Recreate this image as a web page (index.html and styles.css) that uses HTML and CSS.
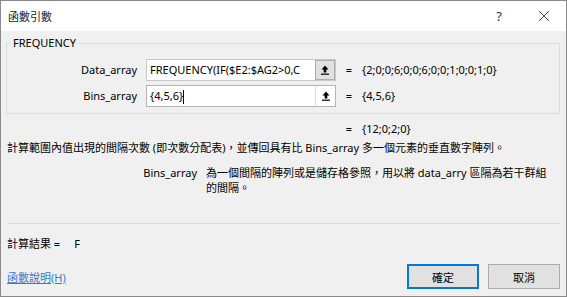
FILE: index.html
```html
<!DOCTYPE html>
<html>
<head>
<meta charset="utf-8">
<link rel="stylesheet" href="styles.css">
</head>
<body>
<div class="win">
  <div class="titlebar">
    <span class="title">函數引數</span>
    <span class="help">?</span>
    <span class="close"><svg width="12" height="12" viewBox="0 0 12 12"><path d="M1 1 L11 11 M11 1 L1 11" stroke="#444" stroke-width="1" fill="none"/></svg></span>
  </div>
  <div class="body">
    <fieldset class="group">
      <legend>FREQUENCY</legend>
      <div class="grid">
        <span class="lbl">Data_array</span>
        <div class="field">
          <span class="txt">FREQUENCY(IF($E2:$AG2&gt;0,C</span>
          <span class="ref pressed"><svg width="8" height="10" viewBox="0 0 8 10"><path d="M4 0.5 L7.5 4.5 L5.3 4.5 L5.3 7.5 L2.7 7.5 L2.7 4.5 L0.5 4.5 Z" fill="#000"/><rect x="0" y="8.6" width="8" height="1.2" fill="#000"/></svg></span>
        </div>
        <span class="eq">=</span>
        <span class="val">{2;0;0;6;0;0;6;0;0;1;0;0;1;0}</span>

        <span class="lbl">Bins_array</span>
        <div class="field focus">
          <span class="txt">{4,5,6}<span class="caret"></span></span>
          <span class="ref"><svg width="8" height="10" viewBox="0 0 8 10"><path d="M4 0.5 L7.5 4.5 L5.3 4.5 L5.3 7.5 L2.7 7.5 L2.7 4.5 L0.5 4.5 Z" fill="#000"/><rect x="0" y="8.6" width="8" height="1.2" fill="#000"/></svg></span>
        </div>
        <span class="eq">=</span>
        <span class="val">{4,5,6}</span>
      </div>
    </fieldset>
    <div class="grid result">
      <span></span><span></span>
      <span class="eq">=</span>
      <span class="val">{12;0;2;0}</span>
    </div>
    <p class="desc">計算範圍內值出現的間隔次數 (即次數分配表)，並傳回具有比 Bins_array 多一個元素的垂直數字陣列。</p>
    <div class="param">
      <span class="pname">Bins_array</span>
      <span class="ptext">為一個間隔的陣列或是儲存格參照，用以將 data_arry 區隔為若干群組的間隔。</span>
    </div>
    <div class="sep"></div>
    <div class="calc"><span>計算結果 =</span><span class="calcval">F</span></div>
    <div class="footer">
      <a class="link" href="#">函數說明(H)</a>
      <div class="buttons">
        <button class="btn default">確定</button>
        <button class="btn">取消</button>
      </div>
    </div>
  </div>
</div>
</body>
</html>
```
FILE: styles.css
```css
* { box-sizing: border-box; }
html, body { margin: 0; padding: 0; }
body {
  width: 567px;
  height: 297px;
  overflow: hidden;
  font-family: "Noto Sans", "Noto Sans CJK TC", sans-serif;
  font-size: 11px;
  color: #000;
  background: #f0f0f0;
}
.win {
  width: 567px;
  height: 297px;
  border: 1px solid #8a8a8a;
  background: #f0f0f0;
  display: flex;
  flex-direction: column;
}
.titlebar {
  height: 30px;
  background: #fff;
  display: flex;
  align-items: center;
  padding-left: 7px;
  flex: none;
}
.title { flex: 1; color: #222; }
.help { width: 20px; text-align: center; color: #333; font-size: 13px; margin-right: 25px; }
.close { width: 20px; display: flex; justify-content: center; margin-right: 12px; }
.body {
  flex: 1;
  padding: 0 6px 0 5px;
  display: flex;
  flex-direction: column;
}
.group {
  margin: 5px 0 0 0;
  padding: 0 0 6px 0;
  border: 1px solid #dcdcdc;
  min-width: 0;
}
.group legend {
  padding: 0 2px;
  margin-left: 4px;
  color: #000;
  line-height: 14px;
}
.grid {
  display: grid;
  grid-template-columns: 139px 195px 16px 1fr;
  row-gap: 4px;
  align-items: center;
  line-height: 16px;
}
.group .grid { margin-top: 9px; }
.lbl { text-align: right; padding-right: 9px; }
.eq { text-align: center; }
.val { padding-left: 5px; }
.field {
  width: 190px;
  height: 22px;
  border: 1px solid #c8c8c8;
  background: #fff;
  display: flex;
  align-items: stretch;
}
.field.focus { border-color: #b4b4b4; }
.txt {
  flex: 1;
  min-width: 0;
  overflow: hidden;
  white-space: nowrap;
  padding-left: 3px;
  line-height: 20px;
}
.caret {
  display: inline-block;
  width: 1px;
  height: 14px;
  background: #000;
  vertical-align: middle;
}
.ref {
  width: 20px;
  flex: none;
  display: flex;
  align-items: center;
  justify-content: center;
  border-left: 1px solid #e0e0e0;
  background: #fff;
}
.ref.pressed {
  background: #e1e1e1;
  border: 1px solid #adadad;
}
.result { margin-top: 7px; padding-left: 1px; }
.desc {
  margin: 3px 0 0 0;
  padding-left: 1px;
  line-height: 16px;
}
.param {
  display: flex;
  margin-top: 9px;
  line-height: 15px;
}
.pname {
  width: 200px;
  text-align: right;
  padding-right: 9px;
  flex: none;
}
.ptext { flex: 1; padding-right: 6px; }
.sep {
  height: 1px;
  background: #dcdcdc;
  margin-top: 28px;
  margin-left: 1px;
}
.calc {
  margin-top: 12px;
  padding-left: 1px;
  line-height: 16px;
  display: flex;
}
.calcval { margin-left: 14px; }
.footer {
  margin-top: 12px;
  display: flex;
  align-items: center;
  justify-content: space-between;
}
.link {
  color: #3a78c9;
  text-decoration: underline;
  padding-left: 1px;
}
.buttons { display: flex; gap: 9px; }
.btn {
  width: 72px;
  height: 25px;
  font-family: "Noto Sans", "Noto Sans CJK TC", sans-serif;
  font-size: 11px;
  background: #e1e1e1;
  border: 1px solid #adadad;
  color: #000;
  padding: 0;
}
.btn.default { border: 2px solid #0078d7; }
```
